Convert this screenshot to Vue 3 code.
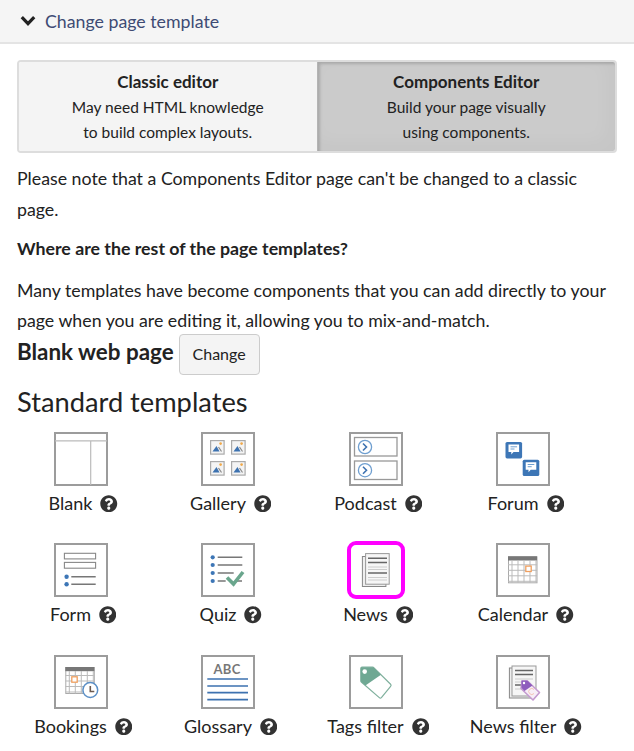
<script setup>
const templates = [
  { name: 'Blank', icon: 'blank' },
  { name: 'Gallery', icon: 'gallery' },
  { name: 'Podcast', icon: 'podcast' },
  { name: 'Forum', icon: 'forum' },
  { name: 'Form', icon: 'form' },
  { name: 'Quiz', icon: 'quiz' },
  { name: 'News', icon: 'news', selected: true },
  { name: 'Calendar', icon: 'calendar' },
  { name: 'Bookings', icon: 'bookings' },
  { name: 'Glossary', icon: 'glossary' },
  { name: 'Tags filter', icon: 'tags' },
  { name: 'News filter', icon: 'newsfilter' },
]
const galleryPos = [[9, 8], [30, 8], [9, 29], [30, 29]]
const calX = [0, 6, 12, 18, 24]
const calY = [0, 5.5, 11, 16.5]
const helpPath = 'M504 256c0 136.997-111.043 248-248 248S8 392.997 8 256C8 119.083 119.043 8 256 8s248 111.083 248 248zM262.655 90c-54.497 0-89.255 22.957-116.549 63.758-3.536 5.286-2.353 12.415 2.715 16.258l34.699 26.31c5.205 3.947 12.621 3.008 16.665-2.122 17.864-22.658 30.113-35.797 57.303-35.797 20.429 0 45.698 13.148 45.698 32.958 0 14.976-12.363 22.667-32.534 33.976C247.128 238.528 216 254.941 216 296v4c0 6.627 5.373 12 12 12h56c6.627 0 12-5.373 12-12v-1.333c0-28.462 83.186-29.647 83.186-106.667 0-58.002-60.165-102-116.531-102zM256 338c-25.365 0-46 20.635-46 46 0 25.364 20.635 46 46 46s46-20.636 46-46c0-25.365-20.635-46-46-46z'
</script>

<template>
  <div class="page">
    <div class="collapse-head">
      <svg class="chevron" width="16" height="12" viewBox="0 0 16 12">
        <path d="M1.8 2.2L8 8.6l6.2-6.4" fill="none" stroke="#222" stroke-width="3.2" />
      </svg>
      <span>Change page template</span>
    </div>

    <div class="content">
      <div class="editor-toggle">
        <div class="editor-opt">
          <strong>Classic editor</strong>
          <span>May need HTML knowledge</span>
          <span>to build complex layouts.</span>
        </div>
        <div class="editor-opt active">
          <strong>Components Editor</strong>
          <span>Build your page visually</span>
          <span>using components.</span>
        </div>
      </div>

      <p class="note">Please note that a Components Editor page can't be changed to a classic page.</p>
      <p class="where">Where are the rest of the page templates?</p>
      <p class="many">Many templates have become components that you can add directly to your page when you are editing it, allowing you to mix-and-match.</p>

      <div class="current">
        <span class="current-name">Blank web page</span>
        <button class="change-btn">Change</button>
      </div>

      <h3 class="section-title">Standard templates</h3>

      <div class="template-grid">
        <div v-for="t in templates" :key="t.name" class="template">
          <div class="thumb" :class="{ selected: t.selected }">
            <svg width="54" height="54" viewBox="0 0 54 54">
              <template v-if="t.icon === 'blank'">
                <path d="M1 8.8h52M36.7 8.8V53" stroke="#bbb" stroke-width="1.2" fill="none" />
              </template>

              <template v-else-if="t.icon === 'gallery'">
                <g v-for="p in galleryPos" :key="p.join()" :transform="`translate(${p[0]} ${p[1]})`">
                  <rect x=".6" y=".6" width="13.5" height="13.5" fill="#f4f4f4" stroke="#aaa" stroke-width="1.2" />
                  <path d="M2.5 11.5l4-5.5 3 5.5z" fill="#3d72b0" />
                  <path d="M8.5 7l3 4.5" stroke="#888" stroke-width="1.2" />
                  <circle cx="10.6" cy="3.6" r="1.3" fill="#f0a848" />
                </g>
              </template>

              <template v-else-if="t.icon === 'podcast'">
                <rect x="5.5" y="5.5" width="42.5" height="18.5" fill="#fff" stroke="#999" stroke-width="1.3" />
                <rect x="5.5" y="29" width="42.5" height="18.5" fill="#fff" stroke="#999" stroke-width="1.3" />
                <circle cx="16" cy="15" r="6.6" fill="#fff" stroke="#6f9fd0" stroke-width="1.3" />
                <circle cx="16" cy="38.2" r="6.6" fill="#fff" stroke="#6f9fd0" stroke-width="1.3" />
                <path d="M14 11.5l3.5 3.5-3.5 3.5M14 34.7l3.5 3.5-3.5 3.5" fill="none" stroke="#3d72b0" stroke-width="1.6" />
              </template>

              <template v-else-if="t.icon === 'forum'">
                <g v-for="p in [[9.5, 10], [26.7, 27.7]]" :key="p[0]" :transform="`translate(${p[0]} ${p[1]})`">
                  <rect width="16.6" height="16.4" rx="1.6" fill="#3d76b6" />
                  <path d="M3 2.6h10.6v7.4H8l-2.2 2.6V10H3z" fill="#fff" />
                  <path d="M5 4.8h6.6M5 7h4" stroke="#6f9fd0" stroke-width="1" />
                </g>
              </template>

              <template v-else-if="t.icon === 'form'">
                <rect x="10.4" y="10.3" width="31.2" height="5.6" fill="none" stroke="#888" stroke-width="1.1" />
                <rect x="10.4" y="19.4" width="31.2" height="5.8" fill="none" stroke="#888" stroke-width="1.1" />
                <circle cx="12.6" cy="33.7" r="2.2" fill="#3d76b6" />
                <circle cx="12.6" cy="41.3" r="2.2" fill="#3d76b6" />
                <path d="M17.3 33.7h24.4M17.3 41.3h24.4" stroke="#777" stroke-width="1.6" />
              </template>

              <template v-else-if="t.icon === 'quiz'">
                <circle v-for="y in [14.3, 22, 30, 38]" :key="y" cx="11.7" :cy="y" r="2.1" fill="#3d76b6" />
                <path d="M16.7 14.3h24.6M16.7 22h24.6M16.7 30h16M16.7 38h8M36 38h5" stroke="#777" stroke-width="1.6" />
                <path d="M26 34.5l6.5 6.5L42 29" fill="none" stroke="#6aa68d" stroke-width="3.6" />
              </template>

              <template v-else-if="t.icon === 'news'">
                <rect x="13.4" y="13.5" width="23.5" height="30" fill="#eee" stroke="#888" stroke-width="1" />
                <rect x="16.6" y="10.6" width="23.6" height="30.6" fill="#f6f6f6" stroke="#999" stroke-width="1" />
                <path d="M19 15.3h19M19 19.5h19M19 30h19" stroke="#666" stroke-width="1.5" />
                <path d="M19 24h19M19 26.5h19M19 34.5h19M19 37h19" stroke="#ccc" stroke-width="1.2" />
              </template>

              <template v-else-if="t.icon === 'calendar'">
                <g transform="translate(12 13.3)">
                  <rect x=".5" y=".5" width="28.5" height="26" fill="#fff" stroke="#aaa" stroke-width="1" />
                  <rect width="29" height="4.2" fill="#777" />
                  <path v-for="x in calX" :key="x" :d="`M${x + 4} 4V26.5`" stroke="#bbb" stroke-width="1" />
                  <path v-for="y in calY" :key="y" :d="`M0 ${y + 8.5}H29`" stroke="#bbb" stroke-width="1" />
                  <rect x="17.8" y="9.8" width="5.4" height="5.4" fill="#fff" stroke="#ef9f5f" stroke-width="1.3" />
                </g>
              </template>

              <template v-else-if="t.icon === 'bookings'">
                <g transform="translate(11.3 12)">
                  <rect x=".5" y=".5" width="28.5" height="26" fill="#fff" stroke="#aaa" stroke-width="1" />
                  <rect width="29" height="4.2" fill="#777" />
                  <path v-for="x in calX" :key="x" :d="`M${x + 4} 4V26.5`" stroke="#bbb" stroke-width="1" />
                  <path v-for="y in calY" :key="y" :d="`M0 ${y + 8.5}H29`" stroke="#bbb" stroke-width="1" />
                  <rect x="6.5" y="9.8" width="5.4" height="5.4" fill="#fff" stroke="#ef9f5f" stroke-width="1.3" />
                </g>
                <circle cx="36.3" cy="35" r="7.4" fill="#fff" stroke="#5b8fc6" stroke-width="1.5" />
                <path d="M36.3 31v5.5h4" fill="none" stroke="#6b5a50" stroke-width="1.6" />
              </template>

              <template v-else-if="t.icon === 'glossary'">
                <text x="26" y="18.8" class="abc">ABC</text>
                <path d="M6.3 24h40.7M6.3 31h40.7M6.3 37.7h40.7M6.3 44.6h40.7" stroke="#3d72b0" stroke-width="1.7" />
              </template>

              <template v-else-if="t.icon === 'tags'">
                <path d="M13 12.2h10.6a2 2 0 0 1 1.4.6l16.6 16.4a1.5 1.5 0 0 1 0 2.1L32.4 42.6a1.5 1.5 0 0 1-2.1 0L12.3 27a1.6 1.6 0 0 1-.5-1.2V13.4a1.2 1.2 0 0 1 1.2-1.2z" fill="#fff" stroke="#7fb09d" stroke-width="1.2" />
                <path d="M13 12.2h10.6a2 2 0 0 1 1.4.6l7 7-15.6 10.8-4.1-3.6a1.6 1.6 0 0 1-.5-1.2V13.4a1.2 1.2 0 0 1 1.2-1.2z" fill="#6fa893" />
                <circle cx="15.7" cy="16.6" r="2.3" fill="#fff" />
              </template>

              <template v-else-if="t.icon === 'newsfilter'">
                <rect x="13.4" y="13" width="22" height="30" fill="#eee" stroke="#888" stroke-width="1" />
                <rect x="16" y="11" width="24" height="30" fill="#f6f6f6" stroke="#999" stroke-width="1" />
                <path d="M19 15.5h18M19 19.5h18M19 30h6" stroke="#666" stroke-width="1.5" />
                <path d="M19 24h18M19 27h6M19 34h8" stroke="#ccc" stroke-width="1.2" />
                <path d="M26 26h5.5l12 11.5-6.5 7.5L25 33.5z" fill="#f7eef7" stroke="#c49ad0" stroke-width="1.6" stroke-linejoin="round" />
                <path d="M25.5 25.5h5.8l5.2 5-8 5.5-3-3z" fill="#8e5dbd" />
                <circle cx="28" cy="28" r="1.2" fill="#fff" />
                <path d="M38 34.5a3 3 0 1 0 0 4" fill="none" stroke="#f3c4b8" stroke-width="1" />
              </template>
            </svg>
          </div>
          <div class="label">
            {{ t.name }}
            <svg class="help" width="17.5" height="17.5" viewBox="0 0 512 512">
              <path :d="helpPath" fill="#333" />
            </svg>
          </div>
        </div>
      </div>
    </div>
  </div>
</template>

<style>
html, body {
  margin: 0;
  background: #fff;
}
</style>

<style scoped>
.page {
  width: 634px;
  height: 751px;
  overflow: hidden;
  font-family: Lato, "Liberation Sans", sans-serif;
  font-size: 17.75px;
  line-height: 30.6px;
  color: #222;
}
.collapse-head {
  display: flex;
  align-items: center;
  height: 42px;
  padding-left: 20px;
  gap: 9px;
  background: #f5f5f5;
  border-bottom: 2px solid #e4e4e4;
  color: #3e4b74;
}
.content {
  padding: 16px 17px 0;
}
.editor-toggle {
  display: flex;
  width: 600px;
  height: 93px;
  box-sizing: border-box;
  border: 2px solid #ddd;
  border-radius: 4px;
  overflow: hidden;
  font-size: 15.5px;
  line-height: 25px;
}
.editor-opt {
  flex: 1;
  display: flex;
  flex-direction: column;
  align-items: center;
  justify-content: center;
  padding-top: 1px;
  background: #f4f4f4;
}
.editor-opt strong {
  font-size: 17px;
  margin-bottom: 1px;
}
.editor-opt.active {
  background: #cbcbcb;
  box-shadow: inset 2px 2px 3px rgba(0, 0, 0, .16), inset -6px -6px 20px rgba(0, 0, 0, .03);
  border-left: 1px solid #b4b4b4;
}
.note {
  margin: 10px 0 0;
}
.where {
  margin: 9px 0 0;
  font-weight: 700;
  font-size: 17.75px;
}
.many {
  margin: 11px 0 0;
}
.current {
  display: flex;
  align-items: center;
  gap: 5px;
  margin-top: -2px;
}
.current-name {
  font-size: 22.4px;
  font-weight: 700;
  margin-bottom: 4px;
}
.change-btn {
  width: 81px;
  height: 41px;
  padding: 0 0 2px;
  font: 16px Lato, sans-serif;
  color: #222;
  background: #f4f4f4;
  border: 1px solid #ccc;
  border-radius: 4px;
}
.section-title {
  margin: 9px 0 0;
  font-size: 27.25px;
  font-weight: 400;
  line-height: 36px;
}
.template-grid {
  display: grid;
  grid-template-columns: repeat(4, 147.5px);
  grid-auto-rows: 111.5px;
  margin: 12px 0 0 -10px;
}
.template {
  display: flex;
  flex-direction: column;
  align-items: center;
  font-size: 18px;
}
.thumb {
  width: 54px;
  height: 54px;
  box-sizing: border-box;
  border: 2px solid #9c9c9c;
  display: flex;
  align-items: center;
  justify-content: center;
}
.thumb svg {
  flex: none;
}
.thumb.selected {
  border-color: transparent;
  outline: 4px solid #f0f;
  outline-offset: -2px;
  border-radius: 7px;
}
.label {
  display: flex;
  align-items: center;
  gap: 8px;
  margin-top: 2px;
  white-space: nowrap;
  padding-left: 5px;
}
.help {
  flex: none;
}
.abc {
  font: 700 13px Lato, sans-serif;
  fill: #777;
  text-anchor: middle;
  letter-spacing: .3px;
}
</style>
